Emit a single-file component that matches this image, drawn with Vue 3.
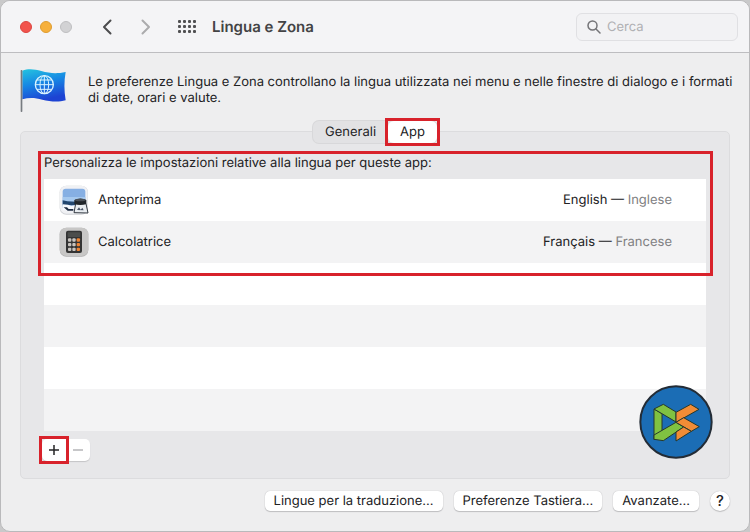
<template>
  <main class="window">
    <header class="toolbar">
      <div class="lights">
        <button class="light close" aria-label="Chiudi"></button>
        <button class="light minimize" aria-label="Riduci"></button>
        <button class="light zoom" aria-label="Ingrandisci" disabled></button>
      </div>
      <nav class="nav">
        <button class="icon-btn" aria-label="Indietro">
          <svg width="10" height="16" viewBox="0 0 10 16"><path d="M8.5 1.5 2 8l6.500 6.500" /></svg>
        </button>
        <button class="icon-btn forward" aria-label="Avanti" disabled>
          <svg width="10" height="16" viewBox="0 0 10 16"><path d="M1.500 1.500 8 8l-6.500 6.500" /></svg>
        </button>
        <button class="icon-btn grid" aria-label="Mostra tutte">
          <svg width="18" height="14" viewBox="0 0 18 14">
            <template v-for="y in 3" :key="y">
              <rect v-for="x in 4" :key="x" :x="x * 5 - 5" :y="y * 5 - 5" width="3" height="3" rx="1" />
            </template>
          </svg>
        </button>
      </nav>
      <h1 class="title">Lingua e Zona</h1>
      <label class="search">
        <svg width="14" height="14" viewBox="0 0 14 14"><circle cx="5.500" cy="5.500" r="4.500" /><path d="m9 9 4 4" /></svg>
        <input v-model="query" type="text" placeholder="Cerca" aria-label="Cerca" />
      </label>
    </header>

    <section class="intro">
      <svg class="flag" width="48" height="44" viewBox="0 0 144 132">
        <defs>
          <linearGradient id="flagFill" x1="0" y1="0" x2="0.300" y2="1">
            <stop offset="0" stop-color="#25c4df" />
            <stop offset="0.500" stop-color="#1686e4" />
            <stop offset="1" stop-color="#1d43d3" />
          </linearGradient>
        </defs>
        <path d="M7 5C25-2 43 0 64 6c25 7 45 9 73 3-5 28-5 55 0 85-25 7-48 3-70-2-22-6-40-7-60-1z" fill="url(#flagFill)" />
        <rect x="2" y="3" width="5" height="126" rx="2" fill="#777b80" />
        <g fill="none" stroke="#d9f3ff" stroke-width="3">
          <circle cx="73" cy="47" r="27" stroke-width="4" />
          <ellipse cx="73" cy="47" rx="13" ry="27" />
          <path d="M73 20v54M46 47h54M51 33h44M51 61h44" />
        </g>
      </svg>
      <p>Le preferenze Lingua e Zona controllano la lingua utilizzata nei menu e nelle finestre di dialogo e i formati di date, orari e valute.</p>
    </section>

    <section class="panel">
      <div class="tabs" role="tablist">
        <button
          v-for="tab in tabs" :key="tab" class="tab" role="tab"
          :class="{ active: tab === activeTab }" :aria-selected="tab === activeTab"
          @click="activeTab = tab"
        >{{ tab }}</button>
      </div>

      <div class="apps">
        <h2 id="apps-label">Personalizza le impostazioni relative alla lingua per queste app:</h2>
        <table aria-labelledby="apps-label">
          <tbody>
            <tr v-for="app in apps" :key="app.name">
              <td class="app-icon">
                <svg v-if="app.icon === 'preview'" width="30" height="30" viewBox="0 0 90 90">
                  <rect x="2" y="2" width="85" height="87" rx="20" fill="#cfd1d5" />
                  <rect x="3" y="2" width="83" height="84" rx="19" fill="#f0f1f4" />
                  <path d="M11 20q0-9 9-9h50q9 0 9 9v48H11z" fill="#86afe3" />
                  <path d="M11 36h68v17H11z" fill="#a5c8ee" />
                  <path d="M11 46l14 3 26 1v11H11z" fill="#22466f" />
                  <path d="M11 58l16 1 10 3 14-2v16H11z" fill="#f7faff" />
                  <path d="M14 67h10l5 5h14v5H26z" fill="#202e43" />
                  <path d="m50 56-5 27 42 1-6-28z" fill="#e9edf1" stroke="#343a42" stroke-width="3" />
                  <path d="M46 45q18-9 36 0v12q-18 6-36 0z" fill="#20252a" />
                  <ellipse cx="64" cy="45" rx="16" ry="4" fill="#4a5058" />
                  <path d="m54 75 6-8 5 7 5-6 4 8z" fill="#4b5668" />
                </svg>
                <svg v-else width="30" height="30" viewBox="0 0 90 90">
                  <rect x="2" y="2" width="86" height="87" rx="20" fill="#afafaf" />
                  <rect x="2" y="2" width="86" height="85" rx="20" fill="#c8c7c6" />
                  <rect x="21" y="11" width="48" height="67" rx="6" fill="#343434" />
                  <rect x="26" y="16" width="38" height="14" rx="2" fill="#4c4d4b" />
                  <g v-for="y in 3" :key="y">
                    <rect
                      v-for="x in 3" :key="x" :x="x * 13 + 14" :y="y * 14 + 20" width="10" height="10" rx="3"
                      :fill="x === 3 ? '#ee8434' : '#c9c4bf'"
                    />
                  </g>
                </svg>
              </td>
              <td>{{ app.name }}</td>
              <td class="lang">{{ app.lang }} — <span>{{ app.localized }}</span></td>
            </tr>
            <tr v-for="n in 4" :key="n"><td colspan="3"></td></tr>
          </tbody>
        </table>
        <div class="mark mark-list"></div>
      </div>

      <div class="edit">
        <button class="marked" aria-label="Aggiungi"><svg width="12" height="12" viewBox="0 0 12 12"><path d="M6 1v10M1 6h10" /></svg></button>
        <button aria-label="Rimuovi" disabled><svg width="12" height="12" viewBox="0 0 12 12"><path d="M1 6h10" /></svg></button>
      </div>

      <svg class="logo" width="74" height="74" viewBox="0 0 222 222">
        <circle cx="111" cy="111" r="107" fill="#1b6db5" stroke="#232c36" stroke-width="6" />
        <g stroke="#26382c" stroke-width="3" stroke-linejoin="round">
          <path d="M45 72 69 86v62l-24 16z" fill="#80c241" />
          <path d="M45 72 73 58 111 81v30L96 102z" fill="#80c241" />
          <path d="M45 150 111 112 134 126 73 167 45 163z" fill="#80c241" />
          <path d="M111 82 155 58 180 73 111 112z" fill="#f18c36" />
          <path d="M111 112 134 98 181 125 157 139z" fill="#f18c36" />
          <path d="M111 141 134 126 157 139 111 168z" fill="#f18c36" />
        </g>
      </svg>
    </section>

    <footer class="actions">
      <button class="push">Lingue per la traduzione...</button>
      <button class="push">Preferenze Tastiera...</button>
      <button class="push">Avanzate...</button>
      <button class="help" aria-label="Aiuto">?</button>
    </footer>
  </main>
</template>

<script setup>
import { ref } from 'vue'

const query = ref('')
const tabs = ['Generali', 'App']
const activeTab = ref('App')

const apps = [
  { name: 'Anteprima', icon: 'preview', lang: 'English', localized: 'Inglese' },
  { name: 'Calcolatrice', icon: 'calculator', lang: 'Français', localized: 'Francese' },
]
</script>

<style>
body { background: #c9c9ca; }
</style>

<style scoped>
* { box-sizing: border-box; }
.window {
  min-height: 100vh; overflow: hidden;
  border: 1px solid #b9b9bb; border-radius: 10px;
  background: #eeeeef; color: #222224;
  font: 13px/16px Inter, "Liberation Sans", sans-serif;
  text-rendering: geometricPrecision;
}
button, input { font: inherit; color: inherit; text-rendering: inherit; margin: 0; padding: 0; border: 0; background: none; }

.toolbar {
  display: flex; align-items: center; height: 52px;
  padding: 0 11px 0 19px; border-bottom: 1px solid #bdbdc0; background: #f4f4f6;
}
.lights { display: flex; gap: 8px; }
.light { width: 12px; height: 12px; border-radius: 50%; border: 1px solid #d0d0d2; }
.close { background: #f2544d; border-color: #dc453f; }
.minimize { background: #f6b03c; border-color: #de9c30; }
.zoom { background: #d2d2d4; border-color: #bfbfc1; }
.nav { display: flex; align-items: center; margin-left: 30px; }
.icon-btn { display: flex; }
.icon-btn path { fill: none; stroke: #4c4c4e; stroke-width: 2; stroke-linecap: round; stroke-linejoin: round; }
.forward { margin-left: 29px; }
.forward path { stroke: #ababad; }
.grid { margin-left: 27px; }
.grid rect { fill: #505052; }
.title { margin: 0 auto 0 16px; font-size: 15px; font-weight: 600; line-height: 20px; color: #434345; }
.search {
  display: flex; align-items: center; gap: 6px; width: 162px; height: 28px;
  padding: 0 10px; border: 1px solid #e0e0e3; border-radius: 6px; background: #f2f2f4;
}
.search svg { flex: none; fill: none; stroke: #747477; stroke-width: 1.500; stroke-linecap: round; }
.search input { flex: 1; min-width: 0; outline: 0; }
.search input::placeholder { color: #b0b0b3; opacity: 1; }

.intro { display: flex; gap: 20px; padding: 16px 8px 0 19px; }
.flag { flex: none; }
.intro p { margin: 5px 0 0; }

.panel {
  position: relative; margin: 18px 19px 0; padding: 0 23px 17px;
  border: 1px solid #dcdcde; border-radius: 5px; background: #e7e7e9;
}
.tabs {
  display: flex; width: max-content; margin: -11px auto 0;
  border-radius: 6px; background: #e2e2e4; box-shadow: 0 0 0 1px #d8d8da;
}
.tab { position: relative; height: 22px; padding: 0 12px; border-radius: 6px; }
.tab.active { background: #fff; }
.tab.active::after { content: ""; position: absolute; inset: -3px; border: 3px solid #d8222b; }

.apps { position: relative; padding-top: 12px; }
.apps h2 { margin: 0 0 8px; font-size: 13px; font-weight: 400; }
table { width: 100%; border-collapse: collapse; background: #fff; }
tr { height: 42px; }
tr:nth-child(even) { background: #f3f3f4; }
td { padding: 0; }
.app-icon { width: 54px; padding-left: 15px; }
.app-icon svg { display: block; }
.lang { padding-right: 34px; text-align: right; }
.lang span { color: #808082; }
.mark { position: absolute; border: 3px solid #d8222b; pointer-events: none; }
.mark-list { inset: 8px -7px auto -6px; height: 125px; }

.edit { display: flex; width: max-content; margin: 8px 0 0 -2px; border-radius: 5px; background: #fff; box-shadow: 0 1px 1px #c4c4c6; }
.edit button { display: grid; place-items: center; width: 24px; height: 22px; }
.edit path { fill: none; stroke: #242426; stroke-width: 1.500; }
.edit button:disabled path { stroke: #b5b5b7; }
.marked { outline: 3px solid #d8222b; }
.logo { position: absolute; right: 16px; bottom: 19px; }

.actions { display: flex; justify-content: flex-end; gap: 11px; padding: 12px 19px 20px; }
.push, .help { height: 20px; background: #fff; box-shadow: 0 0 1px #aaaaac, 0 1px 1px #c0c0c2; }
.push { padding: 0 9px; border-radius: 5px; }
.help { width: 20px; border-radius: 50%; font-size: 15px; font-weight: 500; }
</style>
